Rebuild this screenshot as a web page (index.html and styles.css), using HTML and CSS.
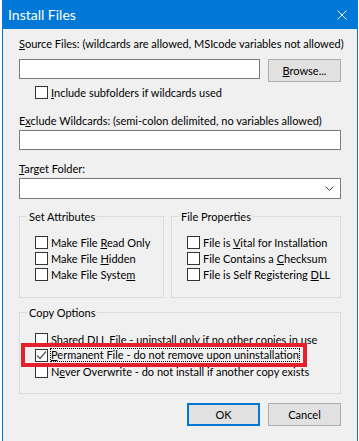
FILE: index.html
```html
<!DOCTYPE html>
<html lang="en">
<head>
  <meta charset="UTF-8" />
  <title>Install Files</title>
  <link rel="stylesheet" href="styles.css">
</head>
<body>

  <div class="window">
    <div class="titlebar">
      <span class="title">Install Files</span>
      <svg class="close" width="10" height="10" viewBox="0 0 10 10">
        <path d="M0.5 0.5 L9.5 9.5 M9.5 0.5 L0.5 9.5" stroke="#fff" stroke-width="1" fill="none"/>
      </svg>
    </div>

    <div class="content">
      <div class="label"><u>S</u>ource Files: (wildcards are allowed, MSIcode variables not allowed)</div>
      <div class="row">
        <input type="text" class="field source">
        <button class="btn"><u>B</u>rowse...</button>
      </div>
      <label class="check sub"><span class="box"></span><span><u>I</u>nclude subfolders if wildcards used</span></label>

      <div class="label exclude">E<u>x</u>clude Wildcards: (semi-colon delimited, no variables allowed)</div>
      <input type="text" class="field wide">

      <div class="label target"><u>T</u>arget Folder:</div>
      <div class="combo">
        <svg width="9" height="5" viewBox="0 0 9 5">
          <path d="M0.5 0.5 L4.5 4.5 L8.5 0.5" stroke="#444" stroke-width="1" fill="none"/>
        </svg>
      </div>

      <div class="groups">
        <fieldset class="group attrs">
          <legend>Set Attributes</legend>
          <div class="options">
            <label class="check"><span class="box"></span><span>Make File <u>R</u>ead Only</span></label>
            <label class="check"><span class="box"></span><span>Make File <u>H</u>idden</span></label>
            <label class="check"><span class="box"></span><span>Make File Syste<u>m</u></span></label>
          </div>
        </fieldset>
        <fieldset class="group props">
          <legend>File Properties</legend>
          <div class="options">
            <label class="check"><span class="box"></span><span>File is <u>V</u>ital for Installation</span></label>
            <label class="check"><span class="box"></span><span>File Contains a <u>C</u>hecksum</span></label>
            <label class="check"><span class="box"></span><span>File is Self Registering <u>D</u>LL</span></label>
          </div>
        </fieldset>
      </div>

      <fieldset class="group copy">
        <legend>Copy Options</legend>
        <div class="options copy-options">
          <label class="check"><span class="box"></span><span>Shared DLL File - uninstall only if no other copies in use</span></label>
          <label class="check marked">
            <span class="box">
              <svg width="11" height="11" viewBox="0 0 11 11">
                <path d="M1 5.5 L4 8.5 L10 1.5" stroke="#555" stroke-width="1.2" fill="none"/>
              </svg>
            </span>
            <span class="focus"><u>P</u>ermanent File - do not remove upon uninstallation</span>
          </label>
          <label class="check"><span class="box"></span><span>N<u>e</u>ver Overwrite - do not install if another copy exists</span></label>
        </div>
      </fieldset>

      <div class="actions">
        <button class="btn default">OK</button>
        <button class="btn">Cancel</button>
      </div>
    </div>
  </div>

</body>
</html>
```

FILE: styles.css
```css
body {
  margin: 0;
  background: #fff;
  font-family: Lato, sans-serif;
  font-size: 11px;
  color: #000;
}

.window {
  width: 354px;
  margin-left: 2px;
  border: 1px solid #0a78d8;
  border-top: none;
  height: 460px;
  background: #f0f0f0;
}

.titlebar {
  height: 29px;
  background: #0078d7;
  display: flex;
  align-items: center;
  justify-content: space-between;
  padding: 0 10px 0 5px;
  color: #fff;
}

.title {
  font-size: 14px;
  margin-top: -1px;
}

.content {
  padding: 0 16px;
}

.label {
  line-height: 16px;
  height: 16px;
  white-space: nowrap;
}

.content > .label:first-child {
  margin-top: 7px;
}

.row {
  display: flex;
  gap: 8px;
  margin-top: 7px;
  align-items: flex-start;
}

.field {
  box-sizing: border-box;
  height: 20px;
  border: 1px solid #7a7a7a;
  background: #fff;
  margin: 0;
  padding: 0 3px;
  font: inherit;
  display: block;
}

.source {
  width: 241px;
}

.wide {
  width: 322px;
  margin-top: 1px;
}

.btn {
  box-sizing: border-box;
  width: 73px;
  height: 23px;
  border: 1px solid #adadad;
  background: #e1e1e1;
  font: inherit;
  color: #000;
  padding: 0;
  margin: 0;
}

.btn.default {
  border: 2px solid #0078d7;
}

.check {
  display: flex;
  align-items: center;
  gap: 3px;
  height: 16px;
  white-space: nowrap;
}

.box {
  box-sizing: border-box;
  width: 13px;
  height: 13px;
  border: 1px solid #333;
  background: #fff;
  flex: none;
  display: flex;
  align-items: center;
  justify-content: center;
}

.check.sub {
  margin-top: 2px;
  padding-left: 16px;
}

.exclude {
  margin-top: 13px;
}

.target {
  margin-top: 11px;
}

.combo {
  box-sizing: border-box;
  height: 21px;
  margin-top: 1px;
  border: 1px solid #7a7a7a;
  background: #fff;
  display: flex;
  align-items: center;
  justify-content: flex-end;
  padding-right: 6px;
}

.groups {
  display: flex;
  gap: 7px;
  margin-top: 10px;
}

.group {
  margin: 0;
  padding: 0 0 0 7px;
  border: 1px solid #dcdcdc;
  min-width: 0;
}

.group legend {
  padding: 0 2px;
  line-height: 15px;
}

.attrs {
  width: 145px;
  box-sizing: border-box;
}

.props {
  width: 170px;
  box-sizing: border-box;
}

.options {
  padding: 10px 0 15px 8px;
}

.copy {
  margin-top: 7px;
}

.copy-options {
  padding: 11px 0 14px 8px;
}

.marked {
  position: relative;
}

.marked::after {
  content: "";
  position: absolute;
  left: -14px;
  top: -4px;
  width: 286px;
  height: 24px;
  box-sizing: border-box;
  border: 4px solid #e3202c;
}

.focus {
  outline: 1px dotted #000;
  outline-offset: 0;
  line-height: 12px;
}

.actions {
  display: flex;
  justify-content: flex-end;
  gap: 8px;
  margin-top: 9px;
}
```
